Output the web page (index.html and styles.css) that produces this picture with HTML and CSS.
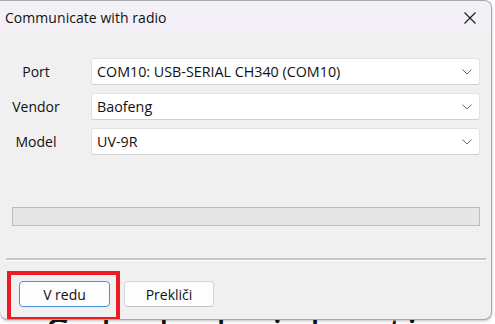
FILE: index.html
```html
<!DOCTYPE html>
<html lang="sl">
<head>
    <meta charset="UTF-8">
    <meta name="viewport" content="width=device-width, initial-scale=1.0">
    <title>Communicate with radio</title>
    <link rel="stylesheet" href="styles.css">
</head>
<body>
    <div class="dialog">
        <div class="titlebar">
            <span class="title">Communicate with radio</span>
            <svg class="close" width="12" height="12" viewBox="0 0 12 12">
                <path d="M0.5 0.5 L11.5 11.5 M11.5 0.5 L0.5 11.5" stroke="#1a1a1a" stroke-width="1.1" fill="none"/>
            </svg>
        </div>
        <div class="content">
            <div class="form">
                <label class="lbl">Port</label>
                <div class="combo">
                    <span>COM10: USB-SERIAL CH340 (COM10)</span>
                    <svg class="chev" width="10" height="6" viewBox="0 0 10 6"><path d="M0.5 0.5 L5 5 L9.5 0.5" stroke="#6a6a6a" stroke-width="1" fill="none"/></svg>
                </div>
                <label class="lbl">Vendor</label>
                <div class="combo">
                    <span>Baofeng</span>
                    <svg class="chev" width="10" height="6" viewBox="0 0 10 6"><path d="M0.5 0.5 L5 5 L9.5 0.5" stroke="#6a6a6a" stroke-width="1" fill="none"/></svg>
                </div>
                <label class="lbl">Model</label>
                <div class="combo">
                    <span>UV-9R</span>
                    <svg class="chev" width="10" height="6" viewBox="0 0 10 6"><path d="M0.5 0.5 L5 5 L9.5 0.5" stroke="#6a6a6a" stroke-width="1" fill="none"/></svg>
                </div>
            </div>
            <div class="progress"></div>
            <div class="separator"></div>
            <div class="buttons">
                <button class="btn default">V redu</button>
                <button class="btn">Prekliči</button>
                <div class="highlight"></div>
            </div>
        </div>
    </div>
    <div class="behind">Sabelade izbrati</div>
</body>
</html>
```

FILE: styles.css
```css
body {
    margin: 0;
    background: #ffffff;
    font-family: "Open Sans", "Noto Sans", sans-serif;
    overflow: hidden;
}
.dialog {
    width: 491px;
    height: 318px;
    background: #f0f0f0;
    border: 1px solid #a8a8a8;
    border-left: none;
    border-radius: 0 8px 8px 8px;
    box-shadow: 0 1px 3px rgba(0, 0, 0, 0.25);
    overflow: hidden;
    position: relative;
    z-index: 1;
}
.titlebar {
    height: 32px;
    background: #f3f1f7;
    display: flex;
    align-items: center;
    justify-content: space-between;
    padding: 0 15px 0 5px;
}
.title {
    font-size: 14px;
    color: #111;
    letter-spacing: 0.05px;
}
.close {
    margin-top: 1px;
}
.content {
    padding: 25px 11px 0 12px;
}
.form {
    display: grid;
    grid-template-columns: 48px 1fr;
    column-gap: 31px;
    row-gap: 8px;
}
.lbl {
    font-size: 14px;
    color: #111;
    text-align: center;
    align-self: center;
}
.combo {
    height: 27px;
    box-sizing: border-box;
    background: #fff;
    border: 1px solid #e3e3e3;
    border-bottom-color: #d0d0d0;
    border-radius: 3px;
    display: flex;
    align-items: center;
    justify-content: space-between;
    padding: 0 7px 0 5px;
    font-size: 14.3px;
    color: #111;
}
.progress {
    margin-top: 52px;
    height: 19px;
    box-sizing: border-box;
    background: #e6e6e6;
    border: 1px solid #bcbcbc;
}
.separator {
    margin: 32px -6px 0 -6px;
    height: 2px;
    background: #c6c6c6;
    border-bottom: 1px solid #ffffff;
}
.buttons {
    position: relative;
    display: flex;
    gap: 14px;
    margin-top: 20px;
    padding-left: 7px;
}
.btn {
    height: 26px;
    width: 90px;
    background: #fdfdfd;
    border: 1px solid #d6d6d6;
    border-bottom-color: #c4c4c4;
    border-radius: 4px;
    font-family: "Open Sans", "Noto Sans", sans-serif;
    font-size: 14px;
    color: #111;
    padding: 0;
}
.btn.default {
    width: 91px;
    border: 1px solid #4a90d9;
}
.highlight {
    position: absolute;
    left: -5px;
    top: -10px;
    width: 105px;
    height: 42px;
    border: 4px solid #ed1c24;
}
.behind {
    margin-top: -17px;
    padding-left: 46px;
    font-family: "Open Sans", sans-serif;
    font-size: 44px;
    line-height: 60px;
    color: #111;
    letter-spacing: 3px;
}
```
